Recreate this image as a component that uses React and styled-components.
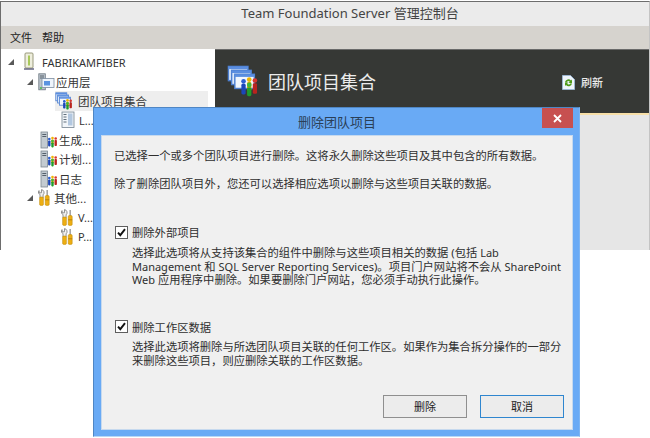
import styled, { createGlobalStyle } from 'styled-components';

const Global = createGlobalStyle`
  html, body { margin: 0; padding: 0; background: #fff; }
  body { font-family: "Noto Sans", "Noto Sans CJK SC", sans-serif; color: #2b2b2b; }
`

const Page = styled.div`
  position: relative;
  width: 650px;
  height: 438px;
  overflow: hidden;
  background: #fff;
`

const Window = styled.div`
  height: 248px;
  margin-top: 1px;
  border: 1px solid #6d6d6d;
  border-bottom: 0;
  border-right-color: #c4c4c4;
  display: flex;
  flex-direction: column;
`

const TitleBar = styled.div`
  height: 24px;
  background: #ebebeb;
  font-size: 13px;
  line-height: 23px;
  text-align: center;
  padding-left: 50px;
  color: #444;
  flex: none;
`

const MenuBar = styled.div`
  height: 23px;
  background: #d6d3ce;
  display: flex;
  gap: 10px;
  padding-left: 9px;
  font-size: 11px;
  line-height: 24px;
  color: #222;
  flex: none;
`

const Body = styled.div`
  flex: 1;
  display: flex;
  min-height: 0;
`

const Tree = styled.div`
  width: 214px;
  flex: none;
  padding-top: 3.5px;
  background: #fff;
`

const Row = styled.div`
  height: 19.4px;
  display: flex;
  align-items: center;
  font-size: 11.5px;
  color: #333;
  margin-left: ${p => p.$indent}px;
  width: ${p => p.$active ? '153px' : 'auto'};
  background: ${p => p.$active ? '#eeeeee' : 'transparent'};
`

const Arrow = styled.span`
  width: 0;
  height: 0;
  flex: none;
  margin-right: 5px;
  border-style: solid;
  border-width: 0 0 6px 6px;
  border-color: transparent transparent #595959 transparent;
`

const NodeIcon = styled.svg`
  width: 18px;
  height: 18px;
  flex: none;
`

const Label = styled.span`
  margin-left: ${p => p.$gap || 0}px;
  white-space: nowrap;
`

const Latin = styled.span`
  font-size: 11px;
`

const Main = styled.div`
  flex: 1;
  min-width: 0;
  background: #e6e6e6;
`

const Banner = styled.div`
  height: 48px;
  background: #363835;
  border-top: 1px solid #6a6a6a;
  border-bottom: 2px solid #f7dfa8;
  display: flex;
  align-items: flex-start;
  color: #ececec;
  padding: 15px 0 0 12px;
`

const BannerTitle = styled.div`
  font-size: 18px;
  line-height: 34px;
  margin-left: 9px;
  width: 294px;
  flex: none;
`

const Refresh = styled.div`
  display: flex;
  align-items: center;
  gap: 6px;
  font-size: 11px;
  font-weight: 500;
  height: 34px;
`

const Dialog = styled.div`
  position: absolute;
  left: 93px;
  top: 107px;
  width: 487px;
  height: 330px;
  box-sizing: border-box;
  background: #69aaf5;
  border: 1px solid #4f86c4;
  border-bottom-color: #b9d6f5;
  border-right-color: #7db4f2;
  padding: 0 6px 6px 7px;
  display: flex;
  flex-direction: column;
`

const DialogTitle = styled.div`
  position: relative;
  height: 27px;
  flex: none;
  text-align: center;
  font-size: 13px;
  line-height: 28px;
  color: #2a3f57;
`

const Close = styled.div`
  position: absolute;
  right: 0;
  top: 0;
  width: 31px;
  height: 20px;
  background: #c75050;
  display: flex;
  align-items: center;
  justify-content: center;
`

const Client = styled.div`
  flex: 1;
  background: #f0f0f0;
  border: 1px solid #c6d9ee;
  padding: 12px 12px 0 12px;
  display: flex;
  flex-direction: column;
  font-size: 11.3px;
  color: #2e2e2e;
  min-height: 0;
`

const Para = styled.p`
  margin: 0 0 ${p => p.$after}px;
  line-height: 15px;
  white-space: nowrap;
`

const CheckRow = styled.label`
  display: flex;
  align-items: center;
  height: 16px;
  gap: 4px;
  margin-left: 1px;
`

const Box = styled.span`
  width: 11px;
  height: 11px;
  background: #fff;
  border: 1px solid #5e5e5e;
  display: flex;
  align-items: center;
  justify-content: center;
  flex: none;
`

const Detail = styled.p`
  margin: ${p => p.$top}px 0 ${p => p.$after}px 18px;
  line-height: ${p => p.$leading}px;
  white-space: nowrap;
`

const Buttons = styled.div`
  display: flex;
  justify-content: flex-end;
  gap: 13px;
  margin: auto -4px 0 0;
  padding-bottom: 11px;
`

const Button = styled.div`
  width: 84px;
  height: 23px;
  box-sizing: border-box;
  background: #ececec;
  border: 1px solid ${p => p.$primary ? '#2f86cf' : '#8f8f8f'};
  text-align: center;
  line-height: 21px;
  font-size: 11px;
  color: #222;
`

function People({ x = 0, y = 0 }) {
  return (
    <g transform={`translate(${x} ${y})`}>
      <circle cx="1.8" cy="2" r="1.3" fill="#2d5fd0" />
      <rect x=".6" y="3.4" width="2.4" height="6" rx=".8" fill="#1c46b8" />
      <circle cx="5" cy="1" r="1.3" fill="#f0b400" />
      <rect x="3.8" y="2.4" width="2.4" height="5" rx=".8" fill="#e3a400" />
      <circle cx="5" cy="4" r="1.3" fill="#3cb83c" />
      <rect x="3.8" y="5.4" width="2.4" height="5" rx=".8" fill="#1f9c2b" />
      <circle cx="8.2" cy="1.5" r="1.3" fill="#d8352e" />
      <rect x="7" y="3" width="2.4" height="6" rx=".8" fill="#b9241e" />
    </g>
  )
}

function ServerIcon() {
  return (
    <NodeIcon viewBox="0 0 18 18">
      <rect x="1" y="1" width="6.5" height="16" fill="#c3cbd1" stroke="#7d8891" strokeWidth=".8" />
      <path d="M2.3 3.5h4M2.3 5.5h4" stroke="#4a5560" strokeWidth=".9" />
      <People x="7.5" y="6" />
    </NodeIcon>
  )
}

function AppIcon() {
  return (
    <NodeIcon viewBox="0 0 18 18">
      <rect x=".8" y=".8" width="6.5" height="16" fill="#bcc5cc" stroke="#6b7680" strokeWidth=".8" />
      <path d="M2 3h4M2 5h4" stroke="#4a5560" strokeWidth=".9" />
      <circle cx="3" cy="15" r="1.1" fill="#4cc04c" />
      <rect x="4" y="5.5" width="12" height="9" fill="#eef4fb" stroke="#7c8da0" strokeWidth=".8" />
      <rect x="6" y="8" width="6" height="4.5" fill="#5b93e0" />
    </NodeIcon>
  )
}

function CollectionIcon({ size = 18 }) {
  return (
    <NodeIcon viewBox="0 0 18 18" style={{ width: size, height: size }}>
      <rect x=".8" y=".8" width="11" height="8" fill="#dbe8fa" stroke="#4d7fd0" strokeWidth=".8" />
      <path d="M.8 1.6h11" stroke="#5b8ee0" strokeWidth="1.4" />
      <rect x="2.6" y="3" width="11" height="8" fill="#dbe8fa" stroke="#4d7fd0" strokeWidth=".8" />
      <path d="M2.6 3.8h11" stroke="#5b8ee0" strokeWidth="1.4" />
      <rect x="4.4" y="5.2" width="11" height="8" fill="#f1f6fd" stroke="#4d7fd0" strokeWidth=".8" />
      <path d="M4.4 6h11" stroke="#5b8ee0" strokeWidth="1.4" />
      <People x="7.5" y="7.2" />
    </NodeIcon>
  )
}

function DocIcon() {
  return (
    <NodeIcon viewBox="0 0 18 18">
      <rect x="3" y="1" width="12" height="15.5" fill="#f1f5f9" stroke="#74838f" strokeWidth=".8" />
      <path d="M4.5 3.5h3M4.5 6h3M4.5 8.5h3M4.5 11h3" stroke="#51606c" strokeWidth=".9" />
      <rect x="9" y="2.5" width="4.5" height="12" fill="#b3c8e0" />
    </NodeIcon>
  )
}

function ToolIcon() {
  return (
    <NodeIcon viewBox="0 0 12 17" style={{ width: 12, height: 17 }}>
      <path d="M3.5.6a3 3 0 0 1 1.6 5.2V9H2V5.8A3 3 0 0 1 1 1.6v2.2h2.4z" fill="#f1f1f1" stroke="#767676" strokeWidth=".8" />
      <rect x="1.6" y="8" width="3.8" height="8.4" rx="1.2" fill="#eeae12" stroke="#b88708" strokeWidth=".5" />
      <rect x="8.4" y="1" width="1.6" height="6" fill="#a6a6a6" />
      <rect x="7.2" y="6.5" width="4" height="9.9" rx="1.2" fill="#eeae12" stroke="#b88708" strokeWidth=".5" />
      <path d="M7.2 10.8h4" stroke="#a87808" strokeWidth=".8" />
    </NodeIcon>
  )
}

function HostIcon() {
  return (
    <NodeIcon viewBox="0 0 18 18">
      <rect x="5" y="1" width="8" height="15" rx="1" fill="#eeeedd" stroke="#8f8f70" strokeWidth=".9" />
      <rect x="8" y="3.5" width="2" height="10" fill="#a8c85a" />
      <path d="M4 17h10" stroke="#5a5a7a" strokeWidth="1.4" />
    </NodeIcon>
  )
}

function RefreshIcon() {
  return (
    <svg width="13" height="15" viewBox="0 0 13 15">
      <path d="M.5.5h8l4 4v10H.5z" fill="#eef4fb" stroke="#9ab4cf" />
      <path d="M3 7a3.4 3.4 0 0 1 6-1.4l1-1V8H6.6l1.2-1.2A2 2 0 0 0 4.4 7.4zM10 8.6a3.4 3.4 0 0 1-6 1.4l-1 1V7.6h3.4L5.2 8.8a2 2 0 0 0 3.4-.6z" fill="#4f9a1a" />
    </svg>
  )
}

function CheckMark() {
  return (
    <svg width="9" height="9" viewBox="0 0 9 9">
      <path d="M1 4.6l2.3 2.6L8 1.2" fill="none" stroke="#111" strokeWidth="1.9" />
    </svg>
  )
}

export default function App() {
  return (
    <Page>
      <Global />
      <Window>
        <TitleBar>Team Foundation Server 管理控制台</TitleBar>
        <MenuBar><span>文件</span><span>帮助</span></MenuBar>
        <Body>
          <Tree>
            <Row $indent={7}><Arrow /><Label $gap={1}><HostIcon /></Label><Label $gap={4}><Latin>FABRIKAMFIBER</Latin></Label></Row>
            <Row $indent={26}><Arrow /><AppIcon /><Label>应用层</Label></Row>
            <Row $indent={54} $active><CollectionIcon /><Label $gap={5}>团队项目集合</Label></Row>
            <Row $indent={58}><DocIcon /><Label $gap={2}><Latin>L...</Latin></Label></Row>
            <Row $indent={39}><ServerIcon /><Label $gap={1}>生成...</Label></Row>
            <Row $indent={39}><ServerIcon /><Label $gap={1}>计划...</Label></Row>
            <Row $indent={39}><ServerIcon /><Label $gap={1}>日志</Label></Row>
            <Row $indent={26}><Arrow /><ToolIcon /><Label $gap={4}>其他...</Label></Row>
            <Row $indent={60}><ToolIcon /><Label $gap={5}><Latin>V...</Latin></Label></Row>
            <Row $indent={60}><ToolIcon /><Label $gap={5}><Latin>P...</Latin></Label></Row>
          </Tree>
          <Main>
            <Banner>
              <CollectionIcon size={32} />
              <BannerTitle>团队项目集合</BannerTitle>
              <Refresh><RefreshIcon />刷新</Refresh>
            </Banner>
          </Main>
        </Body>
      </Window>
      <Dialog>
        <DialogTitle>
          删除团队项目
          <Close>
            <svg width="9" height="9" viewBox="0 0 9 9">
              <path d="M1 1l7 7M8 1l-7 7" stroke="#fff" strokeWidth="1.8" />
            </svg>
          </Close>
        </DialogTitle>
        <Client>
          <Para $after={13}>已选择一个或多个团队项目进行删除。这将永久删除这些项目及其中包含的所有数据。</Para>
          <Para $after={33}>除了删除团队项目外，您还可以选择相应选项以删除与这些项目关联的数据。</Para>
          <CheckRow><Box><CheckMark /></Box>删除外部项目</CheckRow>
          <Detail $top={6} $after={32} $leading={13.5}>
            选择此选项将从支持该集合的组件中删除与这些项目相关的数据 (包括 <Latin>Lab</Latin><br />
            <Latin>Management</Latin> 和 <Latin>SQL Server Reporting Services</Latin>)。项目门户网站将不会从 <Latin>SharePoint</Latin><br />
            <Latin>Web</Latin> 应用程序中删除。如果要删除门户网站，您必须手动执行此操作。
          </Detail>
          <CheckRow><Box><CheckMark /></Box>删除工作区数据</CheckRow>
          <Detail $top={5} $after={0} $leading={14.5}>
            选择此选项将删除与所选团队项目关联的任何工作区。如果作为集合拆分操作的一部分<br />
            来删除这些项目，则应删除关联的工作区数据。
          </Detail>
          <Buttons>
            <Button>删除</Button>
            <Button $primary>取消</Button>
          </Buttons>
        </Client>
      </Dialog>
    </Page>
  )
}
